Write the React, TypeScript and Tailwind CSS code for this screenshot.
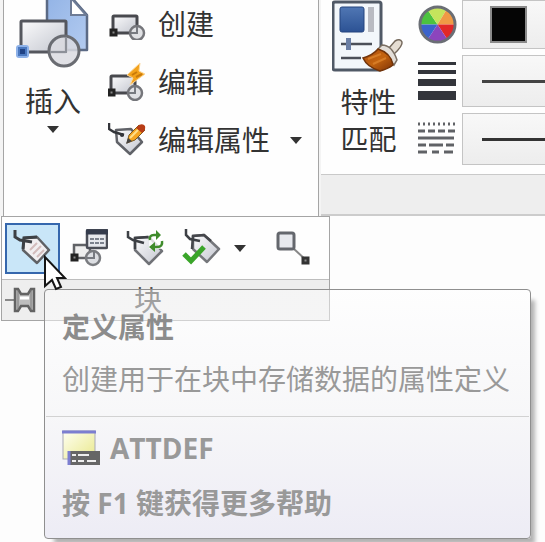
import type { ReactNode } from "react";

const FONT = "font-['Open_Sans','Noto_Sans_CJK_SC',sans-serif]";

function Defs() {
  return (
    <svg className="absolute h-0 w-0" aria-hidden="true">
      <defs>
        <linearGradient id="steel" x1="0" y1="0" x2="1" y2="1">
          <stop offset="0" stopColor="#fbfbfc" />
          <stop offset="1" stopColor="#c3c6cf" />
        </linearGradient>
        <linearGradient id="sky" x1="0" y1="0" x2="1" y2="1">
          <stop offset="0" stopColor="#93b4e6" />
          <stop offset="1" stopColor="#b3cbf0" />
        </linearGradient>
        <linearGradient id="navy" x1="0" y1="0" x2="0" y2="1">
          <stop offset="0" stopColor="#5077b4" />
          <stop offset="1" stopColor="#2c5294" />
        </linearGradient>
        <linearGradient id="bristle" x1="0" y1="0" x2="1" y2="1">
          <stop offset="0" stopColor="#a84a10" />
          <stop offset="0.5" stopColor="#c4640f" />
          <stop offset="1" stopColor="#7d3207" />
        </linearGradient>
        <linearGradient id="lemon" x1="0" y1="0" x2="1" y2="1">
          <stop offset="0" stopColor="#fffff2" />
          <stop offset="1" stopColor="#e9e88c" />
        </linearGradient>
      </defs>
    </svg>
  );
}

function Caret() {
  return (
    <svg width="12" height="7" viewBox="0 0 12 7" aria-hidden="true">
      <path d="M0 0h12L6 7z" fill="#333" />
    </svg>
  );
}

function InsertIcon() {
  return (
    <svg width="76" height="72" viewBox="15 0 76 72" aria-hidden="true">
      <path d="M47 -3H71L87 15V50H47z" fill="url(#sky)" stroke="#5b6a85" strokeWidth="2.5" strokeLinejoin="round" />
      <path d="M71 -2V15H86z" fill="#fff" stroke="#6d7b95" strokeWidth="2" />
      <rect x="21" y="21" width="45" height="31" rx="1" fill="url(#steel)" stroke="#55575e" strokeWidth="3" />
      <circle cx="64" cy="51" r="15" fill="#dadbe0" fillOpacity="0.85" stroke="#6a6c72" strokeWidth="3" />
      <path d="M50 52H66V37" fill="none" stroke="#8d9098" strokeWidth="2" />
      <rect x="16" y="45" width="13" height="13" rx="3" fill="#8db1e8" />
      <rect x="19" y="48" width="7" height="7" fill="#1f4285" stroke="#4a78bf" strokeWidth="2" />
    </svg>
  );
}

function BlockShape() {
  return (
    <>
      <rect x="4" y="3" width="24" height="17" rx="1" fill="url(#steel)" stroke="#48494e" strokeWidth="3" />
      <rect x="2" y="17" width="5" height="5" fill="#888" stroke="#222" strokeWidth="3" />
      <circle cx="28" cy="20" r="7" fill="#e0e1e4" stroke="#75767b" strokeWidth="2.500" />
      <path d="M22 20H28V14" fill="none" stroke="#777a80" strokeWidth="2" />
    </>
  );
}

function CreateIcon() {
  return (
    <svg width="38" height="32" viewBox="0 0 38 32" aria-hidden="true">
      <g transform="translate(1 5)"><BlockShape /></g>
    </svg>
  );
}

function EditIcon() {
  return (
    <svg width="38" height="38" viewBox="0 0 38 38" aria-hidden="true">
      <g transform="translate(-1 10)"><BlockShape /></g>
      <path d="M32 0L19 12L25 15L22 22L37 11L31 8z" fill="#f3a21b" stroke="#fbd9a0" strokeWidth="1" strokeLinejoin="round" />
      <path d="M24 12L29 9M28 14L34 11" fill="none" stroke="#c97a0a" strokeWidth="2" />
    </svg>
  );
}

function EditTagIcon() {
  return (
    <svg width="38" height="34" viewBox="0 0 38 34" aria-hidden="true">
      <path d="M8 7L23 6L34 19L22 31L9 19z" fill="url(#steel)" stroke="#606268" strokeWidth="2.5" strokeLinejoin="round" />
      <path d="M1 0V6L6 9L16 12" fill="none" stroke="#33353a" strokeWidth="2.5" />
      <circle cx="14" cy="12" r="2" fill="#33353a" />
      <path d="M19 20L21 12L31 2L37 7L27 17z" fill="#f5a623" stroke="#7c5a20" />
      <path d="M28 5L31 2Q35 0 37 3Q38 7 34 10z" fill="#b83d16" />
      <path d="M22 15L30 7" stroke="#ffe08a" strokeWidth="2" />
      <path d="M18 21L20 15L24 18z" fill="#444" />
    </svg>
  );
}

function DefineIcon() {
  return (
    <svg width="40" height="36" viewBox="0 0 40 36" aria-hidden="true">
      <path d="M11 8L24 7L36 20L24 33L10 20z" fill="#f1eff1" stroke="#5f6165" strokeWidth="2.500" strokeLinejoin="round" />
      <path d="M2 0V7L7 10L19 12" fill="none" stroke="#3d4045" strokeWidth="3" />
      <path d="M10 19L11 8L24 7" fill="none" stroke="#3d4045" strokeWidth="3" />
      <path d="M17 20L24 13M20 24L28 16M24 27L31 20" stroke="#d3bcbc" strokeWidth="2" />
    </svg>
  );
}

function ManagerIcon() {
  return (
    <svg width="38" height="38" viewBox="0 0 38 38" aria-hidden="true">
      <path d="M4 29V16H20V29H4" fill="#eee" stroke="#606266" strokeWidth="2.500" />
      <rect x="2" y="26" width="5" height="5" fill="#888" stroke="#222" strokeWidth="3" />
      <circle cx="23" cy="29" r="7" fill="#dcdee2" stroke="#7a7c80" strokeWidth="2.5" />
      <path d="M17 29H24V22" fill="none" stroke="#777a80" strokeWidth="2" />
      <rect x="17" y="1" width="20" height="18" rx="1" fill="#e6e8ed" stroke="#4b4e57" strokeWidth="2.500" />
      <path d="M16 3H38" stroke="#343b4c" strokeWidth="5" />
      <path d="M20 10H34M20 14H34" stroke="#7b818d" strokeWidth="2" strokeDasharray="4 1" />
    </svg>
  );
}

function SyncIcon() {
  return (
    <svg width="38" height="36" viewBox="0 0 38 36" aria-hidden="true">
      <path d="M9 8L23 7L36 21L23 34L9 20z" fill="url(#steel)" stroke="#707277" strokeWidth="2.5" strokeLinejoin="round" />
      <path d="M9 19V8L22 7" fill="none" stroke="#3d4045" strokeWidth="2.500" />
      <path d="M2 1V7L7 10L18 13" fill="none" stroke="#3d4045" strokeWidth="2.5" />
      <path d="M23 3H37V19H23z" fill="#fff" fillOpacity="0.75" />
      <path d="M24 10Q23 5 28 5H33M36 11Q37 17 31 17H26" fill="none" stroke="#3f8b2b" strokeWidth="2.5" />
      <path d="M30 0V10L35 5zM29 12V22L23 17z" fill="#3f8b2b" />
    </svg>
  );
}

function CheckTagIcon() {
  return (
    <svg width="40" height="38" viewBox="0 0 40 38" aria-hidden="true">
      <path d="M11 7L22 6L37 20L25 33L11 20z" fill="url(#steel)" stroke="#75777b" strokeWidth="2.5" strokeLinejoin="round" />
      <path d="M10 20L11 7L22 6L29 12" fill="none" stroke="#45474c" strokeWidth="2.5" />
      <path d="M4 0V6L8 10L18 12" fill="none" stroke="#3d4045" strokeWidth="2.5" />
      <path d="M2 25L9 32L22 18" fill="none" stroke="#3aa52a" strokeWidth="5" />
    </svg>
  );
}

function BasePointIcon() {
  return (
    <svg width="36" height="36" viewBox="0 0 36 36" aria-hidden="true">
      <path d="M19 19L31 30" stroke="#888" strokeWidth="2" />
      <rect x="3" y="3" width="16" height="16" rx="2" fill="#e7e9ee" stroke="#64676d" strokeWidth="3" />
      <rect x="28" y="28" width="5" height="5" fill="#888" stroke="#333" strokeWidth="3" />
    </svg>
  );
}

function PinIcon() {
  return (
    <svg width="32" height="26" viewBox="0 0 32 26" aria-hidden="true">
      <path d="M0 13H10" stroke="#888" strokeWidth="2" />
      <path d="M10 2H13L16 7H23L26 2H29V24H26L23 19H16L13 24H10z" fill="#bdbdbd" stroke="#626262" strokeWidth="2.5" />
      <path d="M15 11H24" stroke="#fff" strokeWidth="3" />
      <path d="M13 3V23M26 3V23" stroke="#777" strokeWidth="1" />
    </svg>
  );
}

function MatchIcon() {
  return (
    <svg width="74" height="74" viewBox="333 0 74 74" aria-hidden="true">
      <rect x="334" y="2" width="48" height="68" rx="2" fill="#f3f7fb" stroke="#505966" strokeWidth="3" />
      <rect x="341" y="7" width="24" height="25" rx="2" fill="url(#navy)" stroke="#24457f" />
      <rect x="369" y="7" width="6" height="25" fill="#b9bbc2" />
      <path d="M342 44H373M342 58H362" stroke="#4b4f58" strokeWidth="2.5" />
      <rect x="347" y="38" width="5" height="12" fill="#6b7fa5" />
      <path d="M390 48L396 41Q401 38 403 42Q404 46 394 55z" fill="#e5ddd2" stroke="#75695c" strokeWidth="1.500" />
      <path d="M383 45Q393 45 398 60L395 65Q387 53 379 49z" fill="#e3ded8" stroke="#7a6f63" strokeWidth="1.500" />
      <path d="M379 49Q392 53 394 65Q389 69 381 71Q368 67 364 58Q374 55 379 49z" fill="url(#bristle)" stroke="#713309" strokeWidth="1.5" />
      <path d="M369 59L382 54M374 64L387 58" fill="none" stroke="#d67c26" strokeWidth="2" />
    </svg>
  );
}

function WheelIcon() {
  return (
    <svg width="39" height="39" viewBox="-20 -20 40 40" aria-hidden="true">
      <path d="M0 0H-18A18 18 0 0 1 -10 -15z" fill="#4cc23f" />
      <path d="M0 0L-10 -15A18 18 0 0 1 9 -15z" fill="#c5e45c" />
      <path d="M0 0L9 -15A18 18 0 0 1 18 0z" fill="#f09a45" />
      <path d="M0 0H18A18 18 0 0 1 10 15z" fill="#e22828" />
      <path d="M0 0L10 15A18 18 0 0 1 -10 15z" fill="#8c45bd" />
      <path d="M0 0L-10 15A18 18 0 0 1 -18 0z" fill="#3b63cb" />
      <circle r="18" fill="none" stroke="#6a6e75" strokeWidth="3" />
    </svg>
  );
}

function WeightIcon() {
  return (
    <svg width="39" height="40" viewBox="0 0 39 40" aria-hidden="true">
      <path d="M0 1h38v3H0zM0 9h38v4H0zM0 18h38v7H0zM0 30h38v9H0z" fill="#33353b" />
    </svg>
  );
}

function LinetypeIcon() {
  return (
    <svg width="39" height="34" viewBox="0 0 39 34" aria-hidden="true">
      <g stroke="#606266" strokeWidth="3">
        <path d="M0 2H37" strokeDasharray="2 3" />
        <path d="M0 9H37" strokeDasharray="7 3" />
        <path d="M0 16H36" />
        <path d="M0 23H36" strokeDasharray="8 3 14 3" />
        <path d="M0 30H37" strokeDasharray="9 5 7 5" />
      </g>
    </svg>
  );
}

function CommandIcon() {
  return (
    <svg width="38" height="36" viewBox="0 0 38 36" aria-hidden="true">
      <rect x="1" y="1" width="32" height="28" fill="url(#lemon)" stroke="#a9aab5" />
      <path d="M0 2H34" stroke="#7c7ed0" strokeWidth="3" />
      <rect x="6" y="21" width="32" height="14" fill="#666" />
      <path d="M7 21V35" stroke="#7c7ed0" strokeWidth="3" />
      <path d="M10 25H14M16 25H27M10 31H14M16 31H22M25 31H34" stroke="#eee" strokeWidth="2" />
    </svg>
  );
}

function RowButton({ icon, label, menu }: { icon: ReactNode; label: string; menu?: boolean }) {
  return (
    <button className="flex h-10 items-center gap-3">
      <span className="flex w-[38px] justify-center">{icon}</span>
      <span>{label}</span>
      {menu && <span className="ml-2"><Caret /></span>}
    </button>
  );
}

function Picker({ id, label, icon, tall, children }: { id: string; label: string; icon: ReactNode; tall: string; children: ReactNode }) {
  return (
    <div className={`flex items-center gap-[5px] ${tall}`}>
      <label htmlFor={id} aria-label={label} className="w-[39px] shrink-0">{icon}</label>
      <div className="relative h-full min-w-0 grow">
        <select
          id={id}
          aria-label={label}
          className="h-full w-full appearance-none border border-r-0 border-[#c4c4c4] bg-linear-to-b from-[#f8f8f8] to-[#ededed]"
        />
        <div className="pointer-events-none absolute inset-y-0 right-0 left-5 flex items-center">{children}</div>
      </div>
    </div>
  );
}

function Ribbon() {
  return (
    <div className="flex h-[216px] items-stretch bg-[#f4f4f4]">
      <section aria-label="块" className="ml-[3px] flex w-[316px] shrink-0 items-start border-x border-x-[#a5a5a5] bg-[#fefefe]">
        <button className="flex w-[98px] flex-col items-center">
          <InsertIcon />
          <span className="mt-2 leading-[42px]">插入</span>
          <span className="mt-1"><Caret /></span>
        </button>
        <div className="ml-[6px] flex flex-col items-start gap-[18px] pt-1">
          <RowButton icon={<CreateIcon />} label="创建" />
          <RowButton icon={<EditIcon />} label="编辑" />
          <RowButton icon={<EditTagIcon />} label="编辑属性" menu />
        </div>
      </section>
      <section aria-label="特性" className="ml-[2px] flex min-w-0 grow flex-col">
        <div className="flex h-[175px] items-start border-b border-[#c9c9c9] bg-[#fefefe]">
          <button className="flex w-[95px] shrink-0 flex-col items-center leading-[37px]">
            <MatchIcon />
            <span className="mt-[10px]">特性</span>
            <span>匹配</span>
          </button>
          <div className="ml-[2px] flex min-w-0 grow flex-col gap-[6px]">
            <Picker id="color" label="颜色" icon={<WheelIcon />} tall="h-[49px]">
              <span className="ml-2 h-[37px] w-[37px] border-2 border-[#8a8a8a] bg-[#050505]" />
            </Picker>
            <Picker id="weight" label="线宽" icon={<WeightIcon />} tall="h-[52px]">
              <span className="h-[3px] w-full bg-[#444]" />
            </Picker>
            <Picker id="linetype" label="线型" icon={<LinetypeIcon />} tall="h-[52px]">
              <span className="h-[3px] w-full bg-[#333]" />
            </Picker>
          </div>
        </div>
        <div className="grow border-b-2 border-[#cccccc] bg-[#eeeeee]" />
      </section>
    </div>
  );
}

function Flyout() {
  return (
    <section aria-label="块" className="ml-px w-[329px] border border-[#a5a5a5] bg-[#fefefe]">
      <div className="flex h-[62px] items-center pl-[3px]">
        <button aria-label="定义属性" className="flex h-[51px] w-[55px] items-center justify-center border-2 border-[#3567ad] bg-[#c9e6f8]">
          <DefineIcon />
        </button>
        <button aria-label="块属性管理器" className="ml-[10px]"><ManagerIcon /></button>
        <button aria-label="同步" className="ml-[18px]"><SyncIcon /></button>
        <button aria-label="验证" className="ml-[18px] flex items-center gap-3"><CheckTagIcon /><Caret /></button>
        <button aria-label="基点" className="ml-[29px]"><BasePointIcon /></button>
      </div>
      <div className="flex h-[41px] items-center border-t border-[#bdbdbd] bg-[#eeeeee] pl-[3px]">
        <button aria-label="固定"><PinIcon /></button>
        <h2 className="ml-[97px] leading-7 text-[#555]">块</h2>
      </div>
    </section>
  );
}

function Tooltip() {
  return (
    <div role="tooltip" className="absolute top-[289px] right-[14px] left-[44px] rounded-[4px] border border-[#8f8f8f] bg-linear-to-b from-white/40 via-[#f6f6f8]/85 to-[#edecf5] text-[#999] shadow-[7px_8px_4px_-3px_#b3b3b3]">
      <div className="flex h-[126px] flex-col gap-6 pt-[23px] pl-[17px] leading-7 whitespace-nowrap">
        <h3 className="font-bold text-[#8c8c8c]">定义属性</h3>
        <p>创建用于在块中存储数据的属性定义</p>
      </div>
      <div className="mx-px flex h-[122px] flex-col gap-[15px] border-t border-[#d2d2d2] pt-[11px] pl-4 font-bold leading-10">
        <div className="flex items-center gap-[10px]"><CommandIcon />ATTDEF</div>
        <p>按 F1 键获得更多帮助</p>
      </div>
    </div>
  );
}

function Cursor() {
  return (
    <svg className="absolute top-[255px] left-[43px]" width="24" height="37" viewBox="0 0 24 37" aria-hidden="true">
      <path d="M2 2V31L9 25L13 34L18 32L14 23H22z" fill="#fff" stroke="#151515" strokeWidth="2" />
    </svg>
  );
}

export default function App() {
  return (
    <main className={`relative min-h-screen overflow-hidden bg-[#fdfdfd] text-[28px] text-[#333] ${FONT}`}>
      <Defs />
      <Ribbon />
      <Flyout />
      <Tooltip />
      <Cursor />
    </main>
  );
}
